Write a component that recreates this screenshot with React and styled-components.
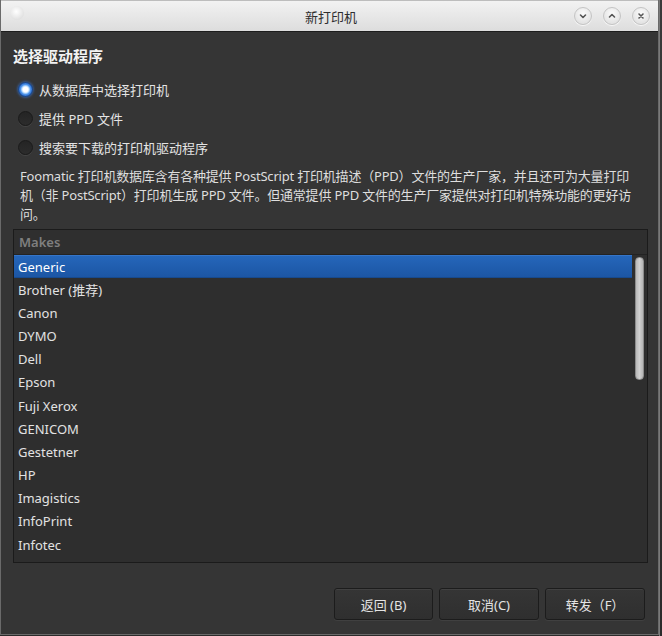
import React from "react";
import styled, { createGlobalStyle } from "styled-components";

const Global = createGlobalStyle`
  html, body { margin: 0; padding: 0; background: #3a3a3a; }
  body { font-family: "Noto Sans", "Noto Sans CJK SC", sans-serif; }
  * { box-sizing: border-box; }
`;

const Screen = styled.div`
  width: 662px;
  height: 636px;
  display: flex;
  background: #2b2b2b;
  overflow: hidden;
`;

const Window = styled.div`
  width: 659px;
  height: 635px;
  display: flex;
  flex-direction: column;
  background: #353535;
  border: 1px solid #6a6a6a;
  border-top: none;
`;

const TitleBar = styled.div`
  height: 32px;
  flex: none;
  display: flex;
  align-items: center;
  justify-content: space-between;
  padding: 0 8px 0 9px;
  background: linear-gradient(#f2f2f2, #dddddd);
  border-top: 1px solid #bdbdbd;
  border-bottom: 1px solid #1d1d1d;
  font-family: "Noto Sans CJK SC", sans-serif;
  font-size: 13px;
  color: #2e2e2e;
`;

const MenuDot = styled.div`
  width: 14px;
  height: 14px;
  border-radius: 50%;
  background: radial-gradient(circle at 45% 40%, #ffffff, #e6e6e6 60%, #d4d4d4);
  margin-top: -6px;
`;

const Title = styled.div`
  flex: 1;
  text-align: center;
  padding-left: 64px;
`;

const Controls = styled.div`
  display: flex;
  gap: 11px;
`;

const CtrlBtn = styled.div`
  width: 18px;
  height: 18px;
  border-radius: 50%;
  background: radial-gradient(circle at 50% 35%, #fbfbfb, #e4e4e4 70%);
  border: 1px solid #c4c4c4;
  box-shadow: 0 1px 1px rgba(255,255,255,0.8);
  display: flex;
  align-items: center;
  justify-content: center;
`;

const Content = styled.div`
  flex: 1;
  display: flex;
  flex-direction: column;
  padding: 13px 10px 0 12px;
  color: #e2e2e2;
`;

const Heading = styled.div`
  font-family: "Noto Sans CJK SC", sans-serif;
  font-weight: 700;
  font-size: 15px;
  line-height: 22px;
  color: #f2f2f2;
`;

const RadioGroup = styled.div`
  display: flex;
  flex-direction: column;
  margin-top: 8px;
`;

const RadioRow = styled.label`
  height: 29px;
  display: flex;
  align-items: center;
  gap: 6px;
  padding-left: 5px;
  font-family: "Noto Sans", "Noto Sans CJK SC", sans-serif;
  font-size: 13px;
  color: #e4e4e4;
`;

const RadioDot = styled.span`
  width: 15px;
  height: 15px;
  border-radius: 50%;
  flex: none;
  border: 1px solid ${p => (p.$on ? "#1a4d9a" : "#1a1a1a")};
  background: ${p =>
    p.$on
      ? "radial-gradient(circle, #ffffff 0 2.5px, #bfe0ff 3.5px, #4d93ea 5px, #2563c2 7px)"
      : "linear-gradient(#242424, #2c2c2c)"};
  box-shadow: ${p => (p.$on ? "0 0 3px #3b7be0" : "0 1px 0 #444")};
`;

const Desc = styled.p`
  margin: 5px 0 0;
  padding: 0 0 0 7px;
  font-size: 13px;
  line-height: 19px;
  letter-spacing: -0.2px;
  white-space: nowrap;
  color: #dedede;
  font-family: "Noto Sans", "Noto Sans CJK SC", sans-serif;
`;

const ListBox = styled.div`
  margin-top: 5px;
  width: 635px;
  height: 334px;
  background: #2e2e2e;
  border: 1px solid #1b1b1b;
  display: flex;
  flex-direction: column;
  overflow: hidden;
`;

const ListHeader = styled.div`
  height: 25px;
  flex: none;
  display: flex;
  align-items: center;
  padding-left: 5px;
  font-size: 13px;
  font-weight: 600;
  color: #7f7f7f;
  background: #2f2f2f;
  border-bottom: 1px solid #232323;
`;

const ListBody = styled.div`
  flex: 1;
  display: flex;
  min-height: 0;
`;

const Rows = styled.div`
  flex: 1;
  display: flex;
  flex-direction: column;
`;

const Row = styled.div`
  height: ${p => (p.$sel ? 23 : 23.2)}px;
  flex: none;
  display: flex;
  align-items: center;
  padding-left: 4px;
  font-size: 13px;
  font-family: "Noto Sans", "Noto Sans CJK SC", sans-serif;
  color: ${p => (p.$sel ? "#ffffff" : "#e2e2e2")};
  background: ${p => (p.$sel ? "linear-gradient(#2566ba, #1c56a4)" : "transparent")};
  border-top: 1px solid ${p => (p.$sel ? "#3575c8" : "transparent")};
  border-bottom: 1px solid ${p => (p.$sel ? "#174a8e" : "transparent")};
`;

const Trough = styled.div`
  width: 15px;
  flex: none;
  padding: 2px 3px 0 3px;
  background: #2e2e2e;
`;

const Thumb = styled.div`
  height: 123px;
  border-radius: 4px;
  background: linear-gradient(90deg, #b8b8b8, #d0d0d0 50%, #b4b4b4);
  border: 1px solid #8c8c8c;
`;

const ButtonBar = styled.div`
  display: flex;
  justify-content: flex-end;
  gap: 6px;
  margin-top: 25px;
  padding-right: 3px;
`;

const Button = styled.button`
  width: ${p => p.$w}px;
  height: 32px;
  background: linear-gradient(#353535, #2f2f2f);
  border: 1px solid #1c1c1c;
  border-radius: 3px;
  box-shadow: inset 0 1px 0 #414141, 0 1px 0 #404040;
  color: #e4e4e4;
  font-size: 13px;
  font-family: "Noto Sans", "Noto Sans CJK SC", sans-serif;
  padding: 0;
`;

const RightStrip = styled.div`
  flex: 1;
  background: linear-gradient(#3a3a3a, #2b2b2b);
  border-left: 1px solid #7a7a7a;
`;

const makes = [
  "Generic", "Brother (推荐)", "Canon", "DYMO", "Dell", "Epson", "Fuji Xerox",
  "GENICOM", "Gestetner", "HP", "Imagistics", "InfoPrint", "Infotec",
];

const Chevron = ({ d }) => (
  <svg width="10" height="10" viewBox="0 0 10 10">
    <path d={d} fill="none" stroke="#555" strokeWidth="1.6" strokeLinecap="round" strokeLinejoin="round" />
  </svg>
);

export default function App() {
  return (
    <>
      <Global />
      <Screen>
        <Window>
          <TitleBar>
            <MenuDot />
            <Title>新打印机</Title>
            <Controls>
              <CtrlBtn><Chevron d="M2.5 4 L5 6.5 L7.5 4" /></CtrlBtn>
              <CtrlBtn><Chevron d="M2.5 6 L5 3.5 L7.5 6" /></CtrlBtn>
              <CtrlBtn><Chevron d="M3 3 L7 7 M7 3 L3 7" /></CtrlBtn>
            </Controls>
          </TitleBar>
          <Content>
            <Heading>选择驱动程序</Heading>
            <RadioGroup>
              <RadioRow><RadioDot $on />从数据库中选择打印机</RadioRow>
              <RadioRow><RadioDot />提供 PPD 文件</RadioRow>
              <RadioRow><RadioDot />搜索要下载的打印机驱动程序</RadioRow>
            </RadioGroup>
            <Desc>
              Foomatic 打印机数据库含有各种提供 PostScript 打印机描述（PPD）文件的生产厂家，并且还可为大量打印
              <br />
              机（非 PostScript）打印机生成 PPD 文件。但通常提供 PPD 文件的生产厂家提供对打印机特殊功能的更好访
              <br />
              问。
            </Desc>
            <ListBox>
              <ListHeader>Makes</ListHeader>
              <ListBody>
                <Rows>
                  {makes.map((m, i) => (
                    <Row key={m} $sel={i === 0}>{m}</Row>
                  ))}
                </Rows>
                <Trough><Thumb /></Trough>
              </ListBody>
            </ListBox>
            <ButtonBar>
              <Button $w={99}>返回 (B)</Button>
              <Button $w={100}>取消(C)</Button>
              <Button $w={100}>转发（F）</Button>
            </ButtonBar>
          </Content>
        </Window>
        <RightStrip />
      </Screen>
    </>
  );
}
